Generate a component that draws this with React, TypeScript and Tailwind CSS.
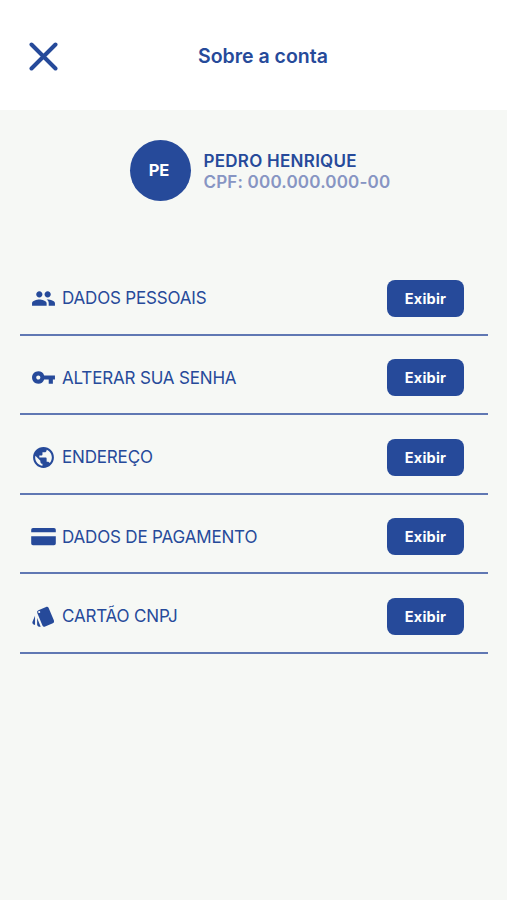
import type { ComponentType } from 'react';
import { MdPeople, MdVpnKey, MdPublic, MdStyle } from 'react-icons/md';

interface MenuItem {
  label: string;
  icon: ComponentType<{ className?: string }>;
}

function CardIcon({ className }: { className?: string }) {
  return (
    <svg viewBox="0 0 25 25" className={className} fill="currentColor">
      <path d="M2 4h21a1.8 1.8 0 0 1 1.8 1.8V8.2H.2V5.8A1.8 1.8 0 0 1 2 4ZM.2 12.3h24.6v7.2a1.8 1.8 0 0 1-1.8 1.8H2a1.8 1.8 0 0 1-1.8-1.8Z" />
    </svg>
  );
}

const items: MenuItem[] = [
  { label: 'DADOS PESSOAIS', icon: MdPeople },
  { label: 'ALTERAR SUA SENHA', icon: MdVpnKey },
  { label: 'ENDEREÇO', icon: MdPublic },
  { label: 'DADOS DE PAGAMENTO', icon: CardIcon },
  { label: 'CARTÃO CNPJ', icon: MdStyle },
];

export default function App() {
  return (
    <div className="min-h-screen bg-[#f6f8f5] font-['Inter',sans-serif] text-[#264a9a]">
      {/* Header */}
      <header className="flex h-[110px] items-center bg-white pt-0.5 pl-[29px]">
        <button aria-label="Fechar">
          <svg viewBox="0 0 29 29" className="size-[29px]" fill="none" stroke="currentColor" strokeWidth="4" strokeLinecap="round">
            <path d="M2.5 2.5 26.5 26.5M26.5 2.5 2.5 26.5" />
          </svg>
        </button>
        <h1 className="ml-[140px] pt-0.5 text-[19.5px] font-semibold">Sobre a conta</h1>
      </header>

      {/* Profile */}
      <section className="flex items-center gap-[13px] pt-[30px] pl-[129.5px]">
        <div className="flex size-[61px] items-center justify-center rounded-full bg-[#264a9a] text-[16.5px] font-bold text-white">
          <span className="-ml-0.5">PE</span>
        </div>
        <div className="pt-0.5 text-[17px] leading-[21px] font-semibold">
          <p className="tracking-[0.27px]">PEDRO HENRIQUE</p>
          <p className="tracking-[0.18px] text-[#8795c3]">CPF: 000.000.000-00</p>
        </div>
      </section>

      <ul className="mr-[19px] ml-5 mt-[55px]">
        {items.map(({ label, icon: Icon }) => (
          <li key={label} className="flex h-[79.5px] items-center border-b-2 border-[#6078b3] pt-[7px] pr-6 pl-[11px]">
            <Icon className="size-[25px]" />
            <span className="ml-1.5 pt-px text-[17px] tracking-[-0.17px]">{label}</span>
            <button className="ml-auto h-[37px] w-[77px] rounded-lg bg-[#264a9a] pt-px text-[14.5px] font-bold tracking-[0.2px] text-white">
              Exibir
            </button>
          </li>
        ))}
      </ul>
    </div>
  );
}
